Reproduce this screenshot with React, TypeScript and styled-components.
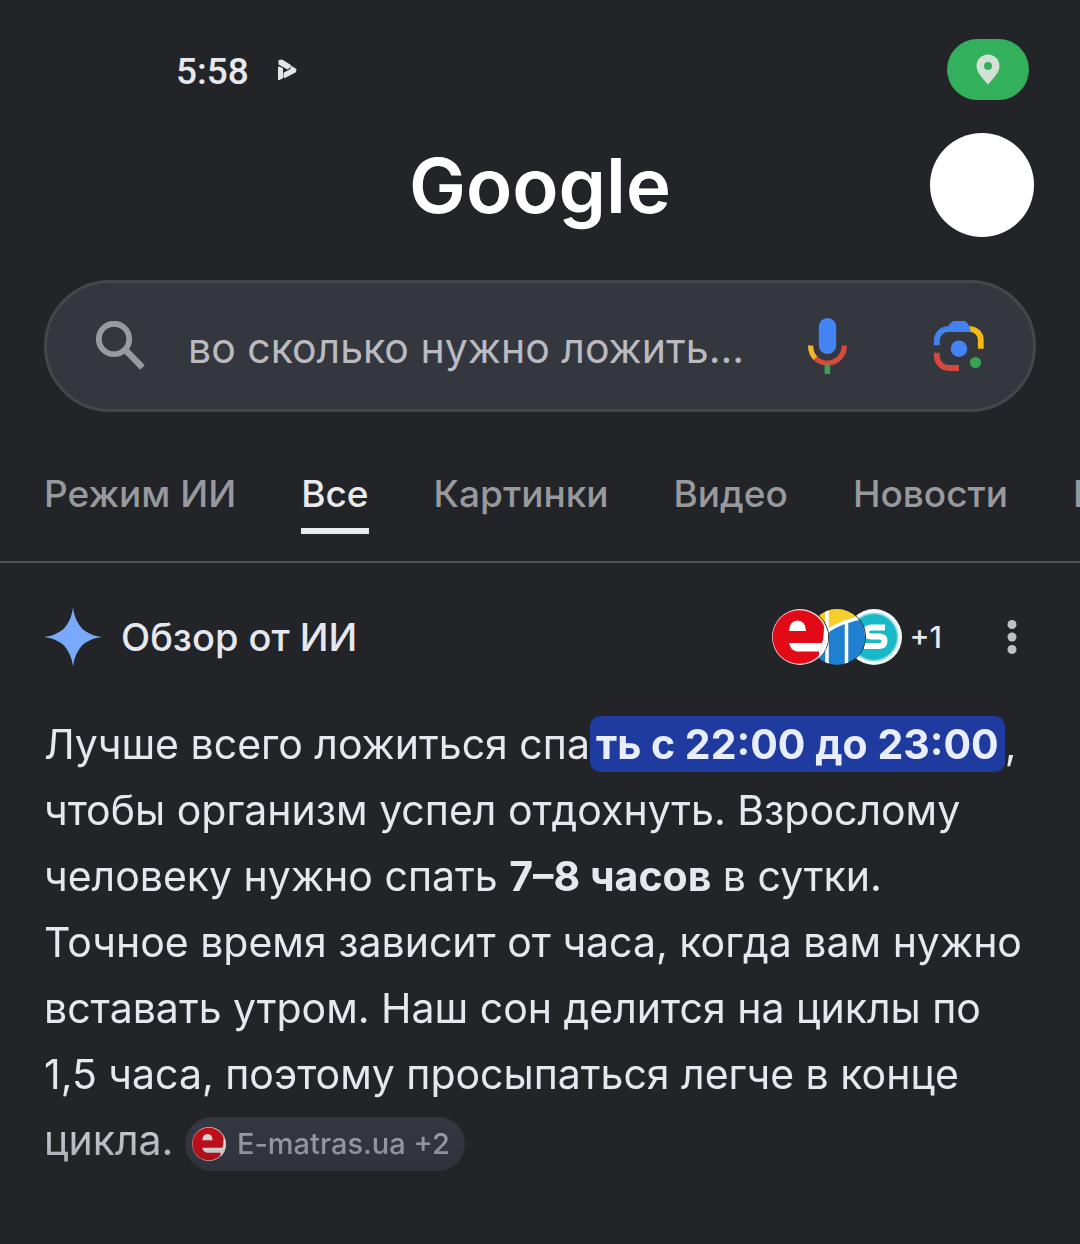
import React from 'react';
import styled, { createGlobalStyle } from 'styled-components';

const GlobalStyle = createGlobalStyle`
  *, *::before, *::after { box-sizing: border-box; }
  body {
    margin: 0;
    background: #222428;
    color: #e6e8f0;
    font-family: Inter, "Noto Sans", sans-serif;
  }
  button, input { font: inherit; color: inherit; }
`;

const Page = styled.div`
  min-height: 100vh;
  overflow-x: hidden;
`;

const StatusBar = styled.div`
  display: flex;
  align-items: center;
  gap: 28px;
  padding: 39px 51px 0 176px;
`;

const Time = styled.time`
  padding-top: 4px;
  font-family: Roboto, sans-serif;
  font-size: 37px;
  font-weight: 500;
  line-height: 57px;
`;

const LocationPill = styled.span`
  display: flex;
  align-items: center;
  justify-content: center;
  width: 82px;
  height: 61px;
  margin-left: auto;
  border-radius: 31px;
  background: #33b05c;
`;

const Header = styled.header`
  display: grid;
  grid-template-columns: 1fr auto 1fr;
  align-items: center;
  padding: 33px 46px 0;
`;

const Wordmark = styled.a`
  grid-column: 2;
  color: #fff;
  font-size: 76px;
  font-weight: 600;
  line-height: 102px;
  text-decoration: none;
`;

const Avatar = styled.button`
  justify-self: end;
  width: 104px;
  height: 104px;
  padding: 0;
  border: 0;
  border-radius: 50%;
  background: #fff;
`;

const SearchBox = styled.form`
  display: flex;
  align-items: center;
  height: 132px;
  margin: 43px 44px 0;
  padding: 0 48px 0 49px;
  border: 3px solid #44464a;
  border-radius: 66px;
  background: #35373f;
`;

const IconButton = styled.button`
  display: flex;
  flex: none;
  padding: 0;
  border: 0;
  background: none;
`;

const SearchInput = styled.input`
  flex: 1;
  min-width: 0;
  margin: 4px 24px 0 42px;
  padding: 0;
  border: 0;
  outline: 0;
  background: none;
  color: #b9bbc1;
  font-size: 41px;
  line-height: 56px;
`;

const SearchActions = styled.div`
  display: flex;
  align-items: center;
  gap: 85px;
`;

const Tabs = styled.nav`
  display: flex;
  gap: 65px;
  padding: 50px 0 27px 44px;
  overflow: hidden;
  border-bottom: 2px solid #515357;
`;

const Tab = styled.a<{ $active?: boolean }>`
  flex: none;
  height: 72px;
  border-bottom: 6px solid ${p => (p.$active ? '#e9eaee' : 'transparent')};
  color: ${p => (p.$active ? '#e9eaee' : '#98999d')};
  font-size: 37px;
  font-weight: 500;
  line-height: 64px;
  text-decoration: none;
`;

const Overview = styled.main`
  padding: 44px 44px 70px;
`;

const OverviewHead = styled.div`
  display: flex;
  align-items: center;
  height: 60px;
`;

const Title = styled.h1`
  flex: 1;
  margin: 0 0 0 19px;
  font-size: 38px;
  font-weight: 500;
  line-height: 60px;
`;

const Sources = styled.button`
  display: flex;
  align-items: center;
  padding: 0;
  border: 0;
  background: none;
  font-size: 30px;
  font-weight: 500;
`;

const SourceIcon = styled.span<{ $level: number }>`
  display: flex;
  z-index: ${p => p.$level};
  margin-right: -21px;
  border: 1px solid #222428;
  border-radius: 50%;
`;

const More = styled.span`
  margin-left: 28px;
`;

const MenuButton = styled(IconButton)`
  margin: 0 19px 0 65px;
`;

const Answer = styled.p`
  margin: 44px 0 0;
  font-size: 41px;
  line-height: 66px;
  mask-image: linear-gradient(#000 82%, rgba(0, 0, 0, 0.66) 100%);
`;

const Highlight = styled.mark`
  padding: 3px 6px;
  border-radius: 10px;
  background: #203b9f;
  color: #e8eeff;
  font-weight: 700;
`;

const SourceChip = styled.button`
  display: inline-flex;
  align-items: center;
  gap: 11px;
  height: 54px;
  padding: 0 15px 0 7px;
  border: 0;
  border-radius: 27px;
  background: #373a45;
  color: #b4b7c1;
  font-size: 29px;
  font-weight: 500;
  line-height: 54px;
  vertical-align: middle;
`;

const PlayGlyph = () => (
  <svg width="20" height="22" viewBox="0 0 20 22" fill="#e4e5ea" stroke="#e4e5ea" strokeWidth="2" strokeLinejoin="round" aria-hidden="true">
    <path d="M2.500 2 5 1.500 13 6.500 10.500 9.500 2.500 5Z" />
    <path d="M2 8.500 5 10V18.500L2 20Z" />
    <path d="M14.500 8 18.500 10.500 18 12.500 7.500 18V14.500L14 11Z" />
  </svg>
);

const PinGlyph = () => (
  <svg width="24" height="31" viewBox="0 0 24 31" aria-hidden="true">
    <path fill="#d3e0d6" fillRule="evenodd" d="M12 .5C5.500.5.5 5.500.5 12 .5 18.500 6 23.500 12 30.500 18 23.500 23.500 18.500 23.500 12 23.500 5.500 18.500.5 12 .5Zm0 7.500a4 4 0 1 1 0 8 4 4 0 0 1 0-8Z" />
  </svg>
);

const SearchGlyph = () => (
  <svg width="50" height="50" viewBox="0 0 50 50" fill="none" stroke="#9a9ba0" strokeWidth="5.8" aria-hidden="true">
    <circle cx="18" cy="18" r="15.2" />
    <path d="M29 28.500 46.500 46.500" strokeWidth="6.400" />
  </svg>
);

const MicGlyph = () => (
  <svg width="40" height="58" viewBox="0 0 40 58" fill="none" strokeWidth="5.2" aria-hidden="true">
    <rect x="10.800" y="1" width="17.400" height="36" rx="8.700" fill="#4483f4" />
    <path stroke="#d44a3d" d="M7.200 41A17 17 0 0 0 36.300 28.500" />
    <path stroke="#f2b52c" d="M2.700 28.500A17 17 0 0 0 7.400 41.200" />
    <path stroke="#3ba255" strokeWidth="5.600" d="M19.400 47.500V57" />
  </svg>
);

const LensGlyph = () => (
  <svg width="52" height="52" viewBox="0 0 52 52" fill="none" strokeWidth="5.800" aria-hidden="true">
    <path stroke="#f4b912" d="M34 9.200h2.500A10.800 10.800 0 0 1 47.800 20v8.800" />
    <path stroke="#4480ee" d="M3.800 25.200V20.500A11.300 11.300 0 0 1 15.100 9.200H20" />
    <path fill="#4480ee" d="M14 12V7.500L17.500 3.200Q19.500 1 21.500 1H31Q33 1 34.400 3.200L36.500 6.500 38 12Z" />
    <path stroke="#d4483d" d="M3.800 32.800v3.200A12 12 0 0 0 15.800 48H26" />
    <circle cx="26" cy="28.700" r="8.300" fill="#4483f4" />
    <circle cx="42.500" cy="42.500" r="5.600" fill="#3ba255" />
  </svg>
);

const SparkGlyph = () => (
  <svg width="58" height="60" viewBox="0 0 58 60" aria-hidden="true">
    <path fill="#78a9fb" d="M29 .5C30 9 33 16 38 21.500 43.500 26.500 50 29 58 30 50 31 43.500 33.500 38 38.500 33 44 30 51 29 59.500 28 51 25 44 20 38.500 14.500 33.500 8 31 0 30 8 29 14.500 26.500 20 21.500 25 16 28 9 29 .5Z" />
  </svg>
);

const DotsGlyph = () => (
  <svg width="10" height="36" viewBox="0 0 10 36" fill="#bfc0c4" aria-hidden="true">
    <circle cx="5" cy="5.500" r="4.500" />
    <circle cx="5" cy="18" r="4.500" />
    <circle cx="5" cy="30.500" r="4.500" />
  </svg>
);

const LogoMatras = ({ size }: { size: number }) => (
  <svg width={size} height={size} viewBox="0 0 56 56" aria-hidden="true">
    <circle cx="28" cy="28" r="28" fill="#f3d6d8" />
    <circle cx="27.500" cy="28" r="26.800" fill="#e30a17" />
    <path fill="#fff" d="M17 22Q17.500 11.500 25.500 11.500 33.500 11.500 34 22Z" />
    <path fill="#fff" d="M17 34H50Q52 30 52 15Q56 22 56 28 56 41 47 49V42.500H25Q18.500 41.500 17 34Z" />
  </svg>
);

const LogoTower = () => (
  <svg width="56" height="56" viewBox="0 0 56 56" aria-hidden="true">
    <clipPath id="tower"><circle cx="28" cy="28" r="28" /></clipPath>
    <g clipPath="url(#tower)">
      <rect width="56" height="56" fill="#1f7fd0" />
      <path fill="#f5cf2b" d="M0 0H56V8Q34 12 18 24L0 34Z" />
      <path stroke="#fff" strokeWidth="3.500" fill="none" d="M15 24Q32 12 56 8M18 0V56M37.500 13V56" />
    </g>
  </svg>
);

const LogoS = () => (
  <svg width="56" height="56" viewBox="0 0 56 56" aria-hidden="true">
    <circle cx="28" cy="28" r="28" fill="#f2fbfc" />
    <circle cx="28" cy="28" r="23.500" fill="#16b9c5" stroke="#7fd6dc" strokeWidth="1.500" />
    <path d="M39 18.500H25.500Q20 18.500 20 23T25.500 27.500H33.500Q38.500 27.500 38.500 32T33.500 37H18" fill="none" stroke="#fff" strokeWidth="6" />
  </svg>
);

const tabs = ['Режим ИИ', 'Все', 'Картинки', 'Видео', 'Новости', 'Покупки'];

export default function App() {
  return (
    <Page>
      <GlobalStyle />
      <StatusBar>
        <Time>5:58</Time>
        <PlayGlyph />
        <LocationPill><PinGlyph /></LocationPill>
      </StatusBar>
      <Header>
        <Wordmark href="#">Google</Wordmark>
        <Avatar aria-label="Аккаунт" />
      </Header>
      <SearchBox role="search" onSubmit={e => e.preventDefault()}>
        <IconButton type="submit" aria-label="Найти"><SearchGlyph /></IconButton>
        <SearchInput aria-label="Поиск" defaultValue="во сколько нужно ложить..." />
        <SearchActions>
          <IconButton type="button" aria-label="Голосовой поиск"><MicGlyph /></IconButton>
          <IconButton type="button" aria-label="Поиск по картинке"><LensGlyph /></IconButton>
        </SearchActions>
      </SearchBox>
      <Tabs>
        {tabs.map(name => (
          <Tab key={name} href="#" $active={name === 'Все'}>{name}</Tab>
        ))}
      </Tabs>
      <Overview>
        <OverviewHead>
          <SparkGlyph />
          <Title>Обзор от ИИ</Title>
          <Sources type="button">
            <SourceIcon $level={3}><LogoMatras size={56} /></SourceIcon>
            <SourceIcon $level={2}><LogoTower /></SourceIcon>
            <SourceIcon $level={1}><LogoS /></SourceIcon>
            <More>+1</More>
          </Sources>
          <MenuButton type="button" aria-label="Ещё"><DotsGlyph /></MenuButton>
        </OverviewHead>
        <Answer>
          Лучше всего ложиться спа<Highlight>ть с 22:00 до 23:00</Highlight>, чтобы организм успел
          отдохнуть. Взрослому человеку нужно спать <b>7–8 часов</b> в сутки. Точное время зависит
          от часа, когда вам нужно вставать утром. Наш сон делится на циклы по 1,5 часа, поэтому
          просыпаться легче в конце цикла.{' '}
          <SourceChip type="button"><LogoMatras size={34} />E-matras.ua +2</SourceChip>
        </Answer>
      </Overview>
    </Page>
  );
}
